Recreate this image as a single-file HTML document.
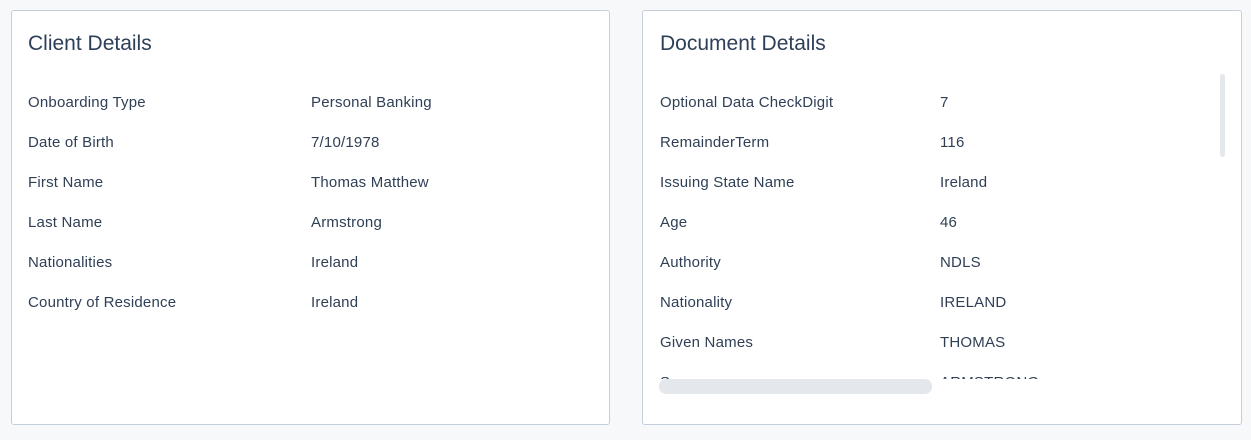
<!DOCTYPE html><html><head><style>
body{margin:0;width:1251px;height:440px;background:#f7f8fa;font-family:"Liberation Sans",sans-serif;color:#2f3f55;position:relative;overflow:hidden}
.p{position:absolute;top:10px;height:415px;background:#fff;border:1px solid #c5cfdc;border-radius:3px;box-sizing:border-box}
h2{position:absolute;margin:0;top:21px;left:16px;font-size:21px;font-weight:normal;color:#2e4058}
.r{position:absolute;font-size:15px;line-height:20px;white-space:nowrap;letter-spacing:0.2px}
.clip{position:absolute;left:0;right:0;top:60px;height:308px;overflow:hidden}
</style></head><body>
<div class="p" style="left:11px;width:599px">
<h2>Client Details</h2>
<div class="r" style="left:16px;top:82px">Onboarding Type</div><div class="r" style="left:299px;top:82px">Personal Banking</div>
<div class="r" style="left:16px;top:122px">Date of Birth</div><div class="r" style="left:299px;top:122px">7/10/1978</div>
<div class="r" style="left:16px;top:162px">First Name</div><div class="r" style="left:299px;top:162px">Thomas Matthew</div>
<div class="r" style="left:16px;top:202px">Last Name</div><div class="r" style="left:299px;top:202px">Armstrong</div>
<div class="r" style="left:16px;top:242px">Nationalities</div><div class="r" style="left:299px;top:242px">Ireland</div>
<div class="r" style="left:16px;top:282px">Country of Residence</div><div class="r" style="left:299px;top:282px">Ireland</div>
</div>
<div class="p" style="left:642px;width:600px">
<h2 style="left:17px">Document Details</h2>
<div class="clip">
<div class="r" style="left:17px;top:22px">Optional Data CheckDigit</div><div class="r" style="left:297px;top:22px">7</div>
<div class="r" style="left:17px;top:62px">RemainderTerm</div><div class="r" style="left:297px;top:62px">116</div>
<div class="r" style="left:17px;top:102px">Issuing State Name</div><div class="r" style="left:297px;top:102px">Ireland</div>
<div class="r" style="left:17px;top:142px">Age</div><div class="r" style="left:297px;top:142px">46</div>
<div class="r" style="left:17px;top:182px">Authority</div><div class="r" style="left:297px;top:182px">NDLS</div>
<div class="r" style="left:17px;top:222px">Nationality</div><div class="r" style="left:297px;top:222px">IRELAND</div>
<div class="r" style="left:17px;top:262px">Given Names</div><div class="r" style="left:297px;top:262px">THOMAS</div>
<div class="r" style="left:17px;top:302px">Surname</div><div class="r" style="left:297px;top:302px">ARMSTRONG</div>
</div>
<div style="position:absolute;left:16px;top:368px;width:273px;height:15px;background:#e4e7eb;border-radius:7px"></div>
<div style="position:absolute;left:577px;top:63px;width:5px;height:83px;background:#e4e7eb;border-radius:3px"></div>
</div>
</body></html>
